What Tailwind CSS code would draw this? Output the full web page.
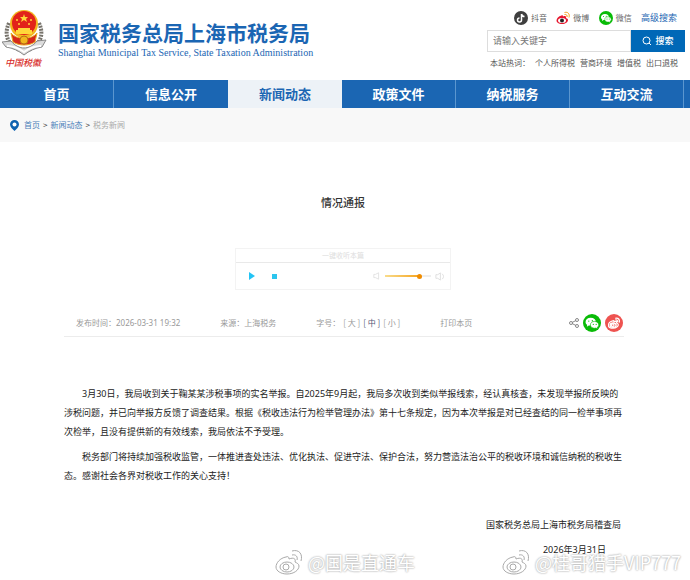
<!DOCTYPE html>
<html lang="zh-CN">
  <head>
    <meta charset="UTF-8" />
    <meta name="viewport" content="width=device-width, initial-scale=1.0" />
    <title>情况通报 - 国家税务总局上海市税务局</title>
    <script src="https://cdn.jsdelivr.net/npm/@tailwindcss/browser@4"></script>
  </head>
  <body class="relative min-h-screen overflow-x-hidden bg-white font-['Noto_Sans_CJK_SC',sans-serif] text-[#333]">
    <!-- shared symbols -->
    <svg class="hidden">
      <symbol id="weibo" viewBox="0 0 28 28">
        <path d="M11 9C5 10 1 15 1 19c0 4 5 7 11 7 7 0 12-4 12-8 0-2-2-3-4-4 1-3-1-5-6-3 0-2-1-3-3-2z" />
        <ellipse cx="12" cy="19" rx="7" ry="5" />
        <circle cx="11" cy="19" r="3" />
        <path d="M17 7c4-1 6 2 5 5M17 3c7-2 11 3 9 10" />
      </symbol>
      <symbol id="wechat" viewBox="0 0 28 28">
        <circle cx="14" cy="14" r="14" fill="#09bb07" />
        <path d="M12 6c-5 0-8 3-8 6.500 0 2 1 3.500 2.500 4.500L6 20l3-2h3c5 0 8-2 8-5.500S17 6 12 6z" fill="#fff" />
        <path d="M18 11.500c-4 0-6.500 2.500-6.500 5.500s3 5.200 6.500 5.200l2-.3 2.500 1.500-.5-2.400c1.500-1 2.500-2.300 2.500-4 0-3-3-5.500-6.500-5.500z" fill="#fff" stroke="#09bb07" />
        <g fill="#09bb07">
          <circle cx="9" cy="11" r="1" /><circle cx="14.500" cy="10.500" r="1" />
          <circle cx="16" cy="16" r="1" /><circle cx="20.500" cy="16" r="1" />
        </g>
      </symbol>
    </svg>

    <!-- header -->
    <header class="flex h-20 items-start justify-between pr-[5px] pl-[2px]">
      <a href="#" class="flex pt-2">
        <svg class="h-[64px] w-[46px] shrink-0" viewBox="0 0 46 64">
          <g fill="none" stroke="#77736b" stroke-width="4" stroke-dasharray="2 1">
            <path d="M7 15C1 28 7 38 18 42M37 15c6 13 0 23-11 27" />
          </g>
          <path d="M0 34l9-1c4 5 9 7 13 7s9-2 13-7l9-1-4 7c-7 1-13 4-18 8-5-4-11-7-18-8z" fill="#dcdcdc" stroke="#888" />
          <path d="M5 38c7 0 13 3 17 6 4-3 10-6 17-6" fill="none" stroke="#fff" stroke-width="2" />
          <circle cx="22" cy="16" r="14" fill="#f3b61f" />
          <circle cx="22" cy="15" r="12" fill="#e2231a" />
          <path d="M22 6l1 3h3l-2 2 1 3-3-2-3 2 1-3-2-2h3z" fill="#ffd83a" />
          <g fill="#ffd83a">
            <circle cx="15" cy="12" r="1" /><circle cx="29" cy="12" r="1" />
            <circle cx="17" cy="16" r="1" /><circle cx="27" cy="16" r="1" />
            <path d="M14 22h2v-2h12v2h2v4H14z" />
          </g>
          <path d="M9 25c5 7 21 7 26 0l-2 9c-6 4-16 4-22 0z" fill="#d5281c" stroke="#e9ac20" />
          <circle cx="22" cy="32" r="4" fill="#f3b61f" stroke="#b77312" />
          <text x="3" y="58" font-size="9" font-style="italic" font-weight="500" fill="#d9302c">中国税徽</text>
        </svg>
        <span class="block pt-[10px] pl-[10px] text-[#1b66b3]">
          <span class="block text-[21px] leading-7 font-bold whitespace-nowrap">国家税务总局上海市税务局</span>
          <span class="block font-['Liberation_Serif',serif] text-[10px] leading-[14px] whitespace-nowrap">Shanghai Municipal Tax Service, State Taxation Administration</span>
        </span>
      </a>

      <div class="w-[198px] pt-[10px] text-[8px]">
        <div class="flex h-4 items-center justify-between pr-2 pl-[27px] text-[#666]">
          <a href="#" class="flex items-center gap-[3px]">
            <svg class="size-[14px]" viewBox="0 0 28 28">
              <circle cx="14" cy="14" r="14" fill="#3f3f3f" />
              <path d="M15 6v12a4 4 0 1 1-4-4M15 6c1 4 3 5 6 5" fill="none" stroke="#fff" stroke-width="3" />
            </svg>抖音</a>
          <a href="#" class="flex items-center gap-[3px]">
            <svg class="size-[14px]" viewBox="0 0 28 28">
              <path d="M11 9C5 10 1 15 1 19c0 4 5 7 11 7 7 0 12-4 12-8 0-2-2-3-4-4 1-3-1-5-6-3 0-2-1-3-3-2z" fill="#e6162d" />
              <ellipse cx="12" cy="19" rx="8" ry="5" fill="#fff" />
              <circle cx="12" cy="19" r="4" fill="#222" />
              <path d="M17 7c4-1 6 2 5 5M17 3c7-2 11 3 9 10" fill="none" stroke="#f6a01a" stroke-width="2" />
            </svg>微博</a>
          <a href="#" class="flex items-center gap-[3px]">
            <svg class="size-[14px]"><use href="#wechat" /></svg>微信</a>
          <a href="#" class="text-[9px] text-[#1b66b3]">高级搜索</a>
        </div>
        <form class="mt-1 flex h-[22px]">
          <input type="text" aria-label="关键字" placeholder="请输入关键字" class="min-w-0 flex-1 border border-[#ddd] px-[5px] text-[9px] outline-none placeholder:text-[#777]" />
          <button type="button" class="flex w-[54px] items-center justify-center gap-[3px] bg-[#0068b7] text-[9px] font-medium text-white">
            <svg class="size-[10px]" viewBox="0 0 20 20" fill="none" stroke="#fff" stroke-width="2">
              <circle cx="9" cy="9" r="7" /><path d="M14 14l4 4" />
            </svg>搜索
          </button>
        </form>
        <div class="mt-1 flex gap-[5px] pl-[3px] leading-[14px] whitespace-nowrap text-[#555]">
          <span>本站热词：</span>
          <a href="#">个人所得税</a>
          <a href="#">营商环境</a>
          <a href="#">增值税</a>
          <a href="#">出口退税</a>
        </div>
      </div>
    </header>

    <!-- main menu -->
    <nav class="grid h-7 grid-cols-6 bg-[#1b66b3] pr-[6px] text-center text-[13px] leading-7 font-bold text-white">
      <a href="#" class="border-r border-[#5b96cf]">首页</a>
      <a href="#">信息公开</a>
      <a href="#" class="bg-[#edf2f7] text-[#1b66b3]">新闻动态</a>
      <a href="#" class="border-r border-[#5b96cf]">政策文件</a>
      <a href="#" class="border-r border-[#5b96cf]">纳税服务</a>
      <a href="#" class="border-r border-[#5b96cf]">互动交流</a>
    </nav>

    <!-- breadcrumb -->
    <div class="flex h-[34px] items-center gap-[3px] bg-[#f8f8f8] pl-[10px] text-[8px] text-[#4a7fb8]">
      <svg class="mr-[2px] h-[11px] w-[9px]" viewBox="0 0 18 22">
        <path d="M9 0a9 9 0 0 0-9 9c0 5 5 9 9 13 4-4 9-8 9-13a9 9 0 0 0-9-9z" fill="#0f62b0" />
        <circle cx="9" cy="9" r="4" fill="#fff" />
      </svg>
      <a href="#">首页</a>
      <span class="text-[#333]">&gt;</span>
      <a href="#">新闻动态</a>
      <span class="text-[#333]">&gt;</span>
      <span class="text-[#aaa]">税务新闻</span>
    </div>

    <main class="pr-1">
      <h1 class="pt-[52px] text-center text-[11px] leading-4 font-medium">情况通报</h1>

      <!-- audio player -->
      <div class="mx-auto mt-[38px] w-[216px] border border-[#f3f3f3]">
        <p class="h-[14px] border-b border-[#e9e9e9] text-center text-[7px] leading-[13px] text-[#ddd]">一键收听本篇</p>
        <div class="flex h-[26px] items-center pr-[6px] pl-3">
          <button type="button" aria-label="播放">
            <svg class="size-2" viewBox="0 0 8 8"><path d="M1 0l6 4-6 4z" fill="#23c4f5" /></svg>
          </button>
          <button type="button" aria-label="停止" class="ml-4 size-[5px] bg-[#2cc5ee]"></button>
          <svg class="mr-1 ml-auto size-2" viewBox="0 0 10 10" fill="none" stroke="#ddd"><path d="M1 3h2l4-2v8L3 7H1z" /></svg>
          <input type="range" aria-label="音量" value="78" class="h-[5px] w-[46px] appearance-none bg-[linear-gradient(90deg,#f9dc8c,#f5a21b_78%,#eee_78%)] bg-[length:100%_2px] bg-center bg-no-repeat [&::-webkit-slider-thumb]:size-[5px] [&::-webkit-slider-thumb]:appearance-none [&::-webkit-slider-thumb]:rounded-full [&::-webkit-slider-thumb]:bg-[#f08c00]" />
          <svg class="ml-1 size-[9px]" viewBox="0 0 10 10" fill="none" stroke="#ddd"><path d="M1 3h2l3-2v8L3 7H1zM8 2c2 2 2 4 0 6" /></svg>
        </div>
      </div>

      <div class="pr-[62px] pl-16">
        <!-- article info -->
        <div class="mt-5 flex h-[27px] items-center gap-10 border-b border-[#ececec] pr-px pl-3 text-[8px] whitespace-nowrap text-[#999]">
          <span class="flex items-center">发布时间：<span class="font-['Noto_Sans',sans-serif]">2026-03-31 19:32</span></span>
          <span>来源：上海税务</span>
          <span class="flex gap-[3px]">字号：<button type="button">[ 大 ]</button><button type="button" class="text-[#557]">[ 中 ]</button><button type="button">[ 小 ]</button></span>
          <button type="button">打印本页</button>
          <span class="ml-auto flex items-center gap-1">
            <svg class="size-[10px]" viewBox="0 0 20 20" fill="none" stroke="#888" stroke-width="2">
              <path d="M6 9l8-4M6 11l8 4" />
              <circle cx="4" cy="10" r="3" /><circle cx="16" cy="4" r="3" /><circle cx="16" cy="16" r="3" />
            </svg>
            <a href="#" aria-label="微信"><svg class="size-[18px]"><use href="#wechat" /></svg></a>
            <a href="#" aria-label="微博" class="flex size-[18px] items-center justify-center rounded-full bg-[#ee5350]">
              <svg class="size-3" fill="none" stroke="#fff" stroke-width="3"><use href="#weibo" /></svg>
            </a>
          </span>
        </div>

        <!-- article body -->
        <article class="pt-[47px] font-['Noto_Sans','Noto_Sans_CJK_SC',sans-serif] text-[9px] leading-[19px] text-[#222]">
          <p class="indent-[18px]">3月30日，我局收到关于鞠某某涉税事项的实名举报。自2025年9月起，我局多次收到类似举报线索，经认真核查，未发现举报所反映的涉税问题，并已向举报方反馈了调查结果。根据《税收违法行为检举管理办法》第十七条规定，因为本次举报是对已经查结的同一检举事项再次检举，且没有提供新的有效线索，我局依法不予受理。</p>
          <p class="mt-[6px] indent-[18px]">税务部门将持续加强税收监管，一体推进查处违法、优化执法、促进守法、保护合法，努力营造法治公平的税收环境和诚信纳税的税收生态。感谢社会各界对税收工作的关心支持！</p>
          <p class="mt-[30px] pr-[3px] text-right">国家税务总局上海市税务局稽查局</p>
          <p class="mt-[6px] pr-[18px] text-right">2026年3月31日</p>
        </article>
      </div>
    </main>

    <!-- watermarks over the page -->
    <div class="absolute top-[548px] left-[275px] flex items-center gap-[5px] text-[18px] leading-[18px] whitespace-nowrap text-white [text-shadow:0_0_2px_#aaa,0_0_2px_#bbb]">
      <svg class="size-7 stroke-[#aaa]" fill="#fff" stroke-width="1"><use href="#weibo" /></svg>
      <span>@国是直通车</span>
    </div>
    <div class="absolute top-[548px] left-[502px] flex items-center gap-[5px] text-[18px] leading-[18px] whitespace-nowrap text-white [text-shadow:0_0_2px_#aaa,0_0_2px_#bbb]">
      <svg class="size-7 stroke-[#aaa]" fill="#fff" stroke-width="1"><use href="#weibo" /></svg>
      <span>@桂哥猎手VIP777</span>
    </div>
  </body>
</html>
